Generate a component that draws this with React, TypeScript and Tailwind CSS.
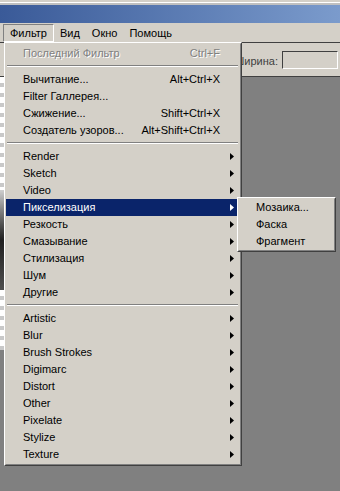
import React from "react";

type Item =
  | { kind: "sep" }
  | { kind: "row"; label: string; shortcut?: string; sub?: boolean; active?: boolean; disabled?: boolean };

const filterMenu: Item[] = [
  { kind: "row", label: "Последний Фильтр", shortcut: "Ctrl+F", disabled: true },
  { kind: "sep" },
  { kind: "row", label: "Вычитание...", shortcut: "Alt+Ctrl+X" },
  { kind: "row", label: "Filter Галлерея..." },
  { kind: "row", label: "Сжижение...", shortcut: "Shift+Ctrl+X" },
  { kind: "row", label: "Создатель узоров...", shortcut: "Alt+Shift+Ctrl+X" },
  { kind: "sep" },
  { kind: "row", label: "Render", sub: true },
  { kind: "row", label: "Sketch", sub: true },
  { kind: "row", label: "Video", sub: true },
  { kind: "row", label: "Пикселизация", sub: true, active: true },
  { kind: "row", label: "Резкость", sub: true },
  { kind: "row", label: "Смазывание", sub: true },
  { kind: "row", label: "Стилизация", sub: true },
  { kind: "row", label: "Шум", sub: true },
  { kind: "row", label: "Другие", sub: true },
  { kind: "sep" },
  { kind: "row", label: "Artistic", sub: true },
  { kind: "row", label: "Blur", sub: true },
  { kind: "row", label: "Brush Strokes", sub: true },
  { kind: "row", label: "Digimarc", sub: true },
  { kind: "row", label: "Distort", sub: true },
  { kind: "row", label: "Other", sub: true },
  { kind: "row", label: "Pixelate", sub: true },
  { kind: "row", label: "Stylize", sub: true },
  { kind: "row", label: "Texture", sub: true },
];

const Arrow = ({ white }: { white?: boolean }) => (
  <svg width="4" height="7" viewBox="0 0 4 7" className="shrink-0">
    <path d="M0 0 L4 3.5 L0 7 Z" fill={white ? "#ffffff" : "#000000"} />
  </svg>
);

const MenuRow = ({ item }: { item: Item }) => {
  if (item.kind === "sep") {
    return (
      <div className="h-[9px] pt-[3px] pl-[1px] pr-[2px]">
        <div className="h-[2px] border-t border-t-[#808080] border-b border-b-white" />
      </div>
    );
  }
  const { label, shortcut, sub, active, disabled } = item;
  return (
    <div
      className={`flex items-center h-[17px] mr-[3px] pl-[17px] ${
        shortcut ? "pr-[17px]" : "pr-[3px]"
      } ${active ? "bg-[#0a246a] text-white" : "text-black"}`}
    >
      <span
        className={`flex-1 whitespace-nowrap ${
          disabled ? "text-[#808080] [text-shadow:1px_1px_0_#ffffff]" : ""
        }`}
      >
        {label}
      </span>
      {shortcut && (
        <span
          className={`whitespace-nowrap ${
            disabled ? "text-[#808080] [text-shadow:1px_1px_0_#ffffff]" : ""
          }`}
        >
          {shortcut}
        </span>
      )}
      {sub && <Arrow white={active} />}
    </div>
  );
};

const Frame = ({ className, children }: { className: string; children: React.ReactNode }) => (
  <div
    className={`absolute bg-[#d4d0c8] border border-t-white border-l-white border-r-[#404040] border-b-[#404040] ${className}`}
  >
    <div className="h-full border border-t-[#d4d0c8] border-l-[#d4d0c8] border-r-[#808080] border-b-[#808080]">
      {children}
    </div>
  </div>
);

export default function App() {
  return (
    <div className="relative w-[340px] h-[491px] overflow-hidden bg-[#808080] font-['Liberation_Sans',Arial,sans-serif] text-[11px] leading-none text-black">
      {/* strip of the window above */}
      <div className="h-[5px] bg-[#d4d0c8] flex flex-col">
        <div className="h-[2px]" />
        <div className="h-[1px] bg-white" />
        <div className="h-[2px] bg-[#c0c0c0]" />
      </div>

      {/* title bar */}
      <div className="h-[18px] bg-gradient-to-r from-[#3a5a98] to-[#7b9bcc]" />

      {/* menu bar */}
      <div className="h-[19px] bg-[#d4d0c8] flex items-stretch pl-[3px] pt-[1px]">
        <div className="flex items-center px-[6px] border border-t-[#808080] border-l-[#808080] border-r-white border-b-white">
          Фильтр
        </div>
        <div className="flex items-center px-[6px]">Вид</div>
        <div className="flex items-center px-[6px]">Окно</div>
        <div className="flex items-center px-[6px]">Помощь</div>
      </div>

      {/* options bar */}
      <div className="h-[35px] bg-[#d4d0c8] border-t border-t-[#404040] border-b border-b-[#404040] flex items-center justify-end pr-[2px] gap-[4px]">
        <span className="text-[#404040] pt-[3px]">Ширина:</span>
        <div className="w-[56px] h-[18px] border border-t-[#404040] border-l-[#404040] border-r-white border-b-white bg-[#d4d0c8]" />
      </div>

      {/* workspace */}
      <div className="flex h-[414px]">
        <div className="w-[4px] flex flex-col">
          <div className="h-[113px] bg-[repeating-linear-gradient(to_bottom,#ffffff_0_6px,#c8c8c8_6px_10px)]" />
          <div className="h-[100px] bg-gradient-to-b from-[#d0d0d0] via-[#202020] to-[#505050]" />
          <div className="h-[60px] bg-[repeating-linear-gradient(to_bottom,#ffffff_0_6px,#c8c8c8_6px_10px)]" />
          <div className="flex-1 bg-[#808080]" />
        </div>
        <div className="flex-1 bg-[#808080]" />
      </div>

      {/* Фильтр dropdown */}
      <Frame className="left-[4px] top-[42px] w-[238px] h-[424px]">
        <div className="pt-[1px]">
          {filterMenu.map((item, i) => (
            <MenuRow key={i} item={item} />
          ))}
        </div>
      </Frame>

      {/* Пикселизация submenu */}
      <Frame className="left-[237px] top-[197px] w-[99px] h-[55px]">
        <div className="pt-[0px]">
          {["Мозаика...", "Фаска", "Фрагмент"].map((s) => (
            <div key={s} className="h-[17px] flex items-center pl-[17px] whitespace-nowrap">
              {s}
            </div>
          ))}
        </div>
      </Frame>
    </div>
  );
}
